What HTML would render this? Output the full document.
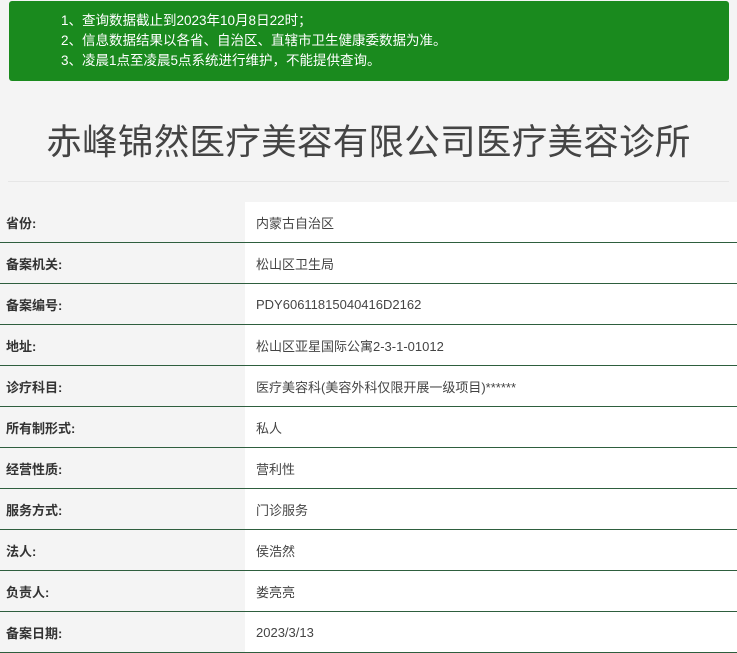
<!DOCTYPE html>
<html><head><meta charset="utf-8"><style>
body{margin:0;width:737px;height:645px;overflow:hidden;background:#f4f4f4;font-family:"Liberation Sans","Noto Sans CJK SC",sans-serif;}
.note{position:absolute;left:9px;top:1px;width:720px;height:80px;background:#1a8a1e;border-radius:3px;color:#fff;font-size:13.5px;line-height:20px;}
.note div{position:absolute;left:52px;top:10px;}
h1{position:absolute;left:0;width:737px;top:118px;margin:0;text-align:center;font-weight:normal;font-size:35.5px;line-height:48px;color:#444;letter-spacing:0.3px;}
.hr{position:absolute;left:8px;right:8px;top:181px;height:1px;background:#e6e6e6;}
table{position:absolute;top:202px;left:0;width:737px;border-collapse:collapse;}
td{height:40px;border-bottom:1px solid #2e5e3e;font-size:13px;padding:0;}
td.l{width:245px;padding-left:6px;box-sizing:border-box;font-weight:bold;color:#333;}
td.r{background:#fff;padding-left:11px;color:#444;}
</style></head><body>
<div class="note"><div>1、查询数据截止到2023年10月8日22时；<br>2、信息数据结果以各省、自治区、直辖市卫生健康委数据为准。<br>3、凌晨1点至凌晨5点系统进行维护，不能提供查询。</div></div>
<h1>赤峰锦然医疗美容有限公司医疗美容诊所</h1>
<div class="hr"></div>
<table>
<tr><td class="l">省份:</td><td class="r">内蒙古自治区</td></tr>
<tr><td class="l">备案机关:</td><td class="r">松山区卫生局</td></tr>
<tr><td class="l">备案编号:</td><td class="r">PDY60611815040416D2162</td></tr>
<tr><td class="l">地址:</td><td class="r">松山区亚星国际公寓2-3-1-01012</td></tr>
<tr><td class="l">诊疗科目:</td><td class="r">医疗美容科(美容外科仅限开展一级项目)******</td></tr>
<tr><td class="l">所有制形式:</td><td class="r">私人</td></tr>
<tr><td class="l">经营性质:</td><td class="r">营利性</td></tr>
<tr><td class="l">服务方式:</td><td class="r">门诊服务</td></tr>
<tr><td class="l">法人:</td><td class="r">侯浩然</td></tr>
<tr><td class="l">负责人:</td><td class="r">娄亮亮</td></tr>
<tr><td class="l">备案日期:</td><td class="r">2023/3/13</td></tr>
</table>
</body></html>
